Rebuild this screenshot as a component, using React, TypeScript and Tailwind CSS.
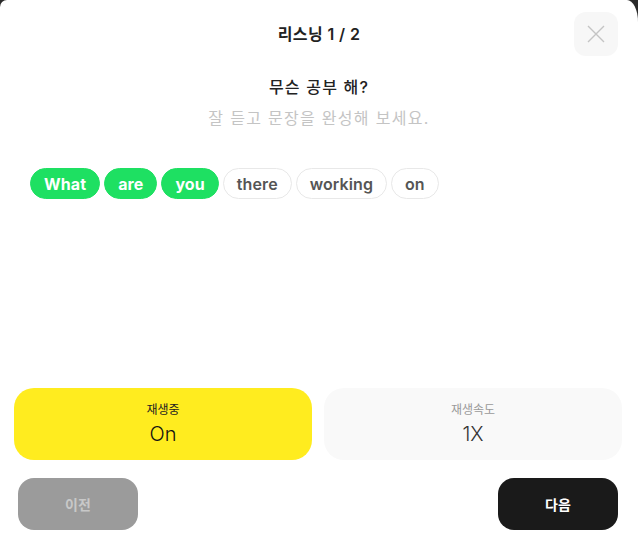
import React from "react";

const font = { fontFamily: "Inter, 'Noto Sans CJK KR', sans-serif" };

function Chip({ text, active }: { text: string; active?: boolean }) {
  return active ? (
    <span className="h-[31px] px-[13px] rounded-full bg-[#1ee062] text-white font-bold text-[16px] tracking-[0.1px] flex items-center border border-[#1ee062]">
      {text}
    </span>
  ) : (
    <span className="h-[31px] px-[13px] rounded-full bg-white text-[#555] font-semibold text-[16px] tracking-[0.1px] flex items-center border border-[#e8e8e8]">
      {text}
    </span>
  );
}

export default function App() {
  return (
    <div className="w-[638px] h-[551px] bg-[#2a2a2a] overflow-hidden" style={font}>
      <div className="w-full h-full bg-white rounded-tl-[7px] rounded-tr-[11px_22px] flex flex-col">
        <div className="relative h-[68px] flex items-center justify-center">
          <span className="text-[16px] font-semibold text-[#222] tracking-[0.4px]">리스닝 1 / 2</span>
          <button className="absolute right-[20px] top-[12px] w-[44px] h-[44px] rounded-[12px] bg-[#f7f7f7] flex items-center justify-center">
            <svg width="18" height="18" viewBox="0 0 18 18" fill="none" stroke="#c4c4c4" strokeWidth="1.4">
              <path d="M1 1L17 17M17 1L1 17" />
            </svg>
          </button>
        </div>
        <div className="flex flex-col items-center mt-[7px]">
          <span className="text-[16px] font-medium text-[#222] leading-[24px] tracking-[1.2px]">무슨 공부 해?</span>
          <span className="text-[16px] text-[#c4c4c4] leading-[24px] mt-[7px] tracking-[1.3px]">잘 듣고 문장을 완성해 보세요.</span>
        </div>
        <div className="flex gap-[4px] pl-[30px] mt-[38px]">
          <Chip text="What" active />
          <Chip text="are" active />
          <Chip text="you" active />
          <Chip text="there" />
          <Chip text="working" />
          <Chip text="on" />
        </div>
        <div className="flex-1" />
        <div className="flex gap-[12px] px-[14px] pr-[16px]">
          <div className="flex-1 h-[72px] rounded-[20px] bg-[#ffec1f] flex flex-col items-center justify-center">
            <span className="text-[12px] text-[#222] leading-[16px]">재생중</span>
            <span className="text-[20px] font-light text-[#111] leading-[26px] mt-[3px]">On</span>
          </div>
          <div className="flex-1 h-[72px] rounded-[20px] bg-[#f9f9f9] flex flex-col items-center justify-center">
            <span className="text-[12px] text-[#999] leading-[16px]">재생속도</span>
            <span className="text-[20px] font-light text-[#333] leading-[26px] mt-[3px]">1X</span>
          </div>
        </div>
        <div className="flex justify-between px-[18px] pr-[20px] mt-[18px] mb-[21px]">
          <button className="w-[120px] h-[52px] rounded-[16px] bg-[#9b9b9b] text-[#c8c8c8] text-[14px] font-bold">이전</button>
          <button className="w-[120px] h-[52px] rounded-[16px] bg-[#1a1a1a] text-white text-[14px] font-bold">다음</button>
        </div>
      </div>
    </div>
  );
}
